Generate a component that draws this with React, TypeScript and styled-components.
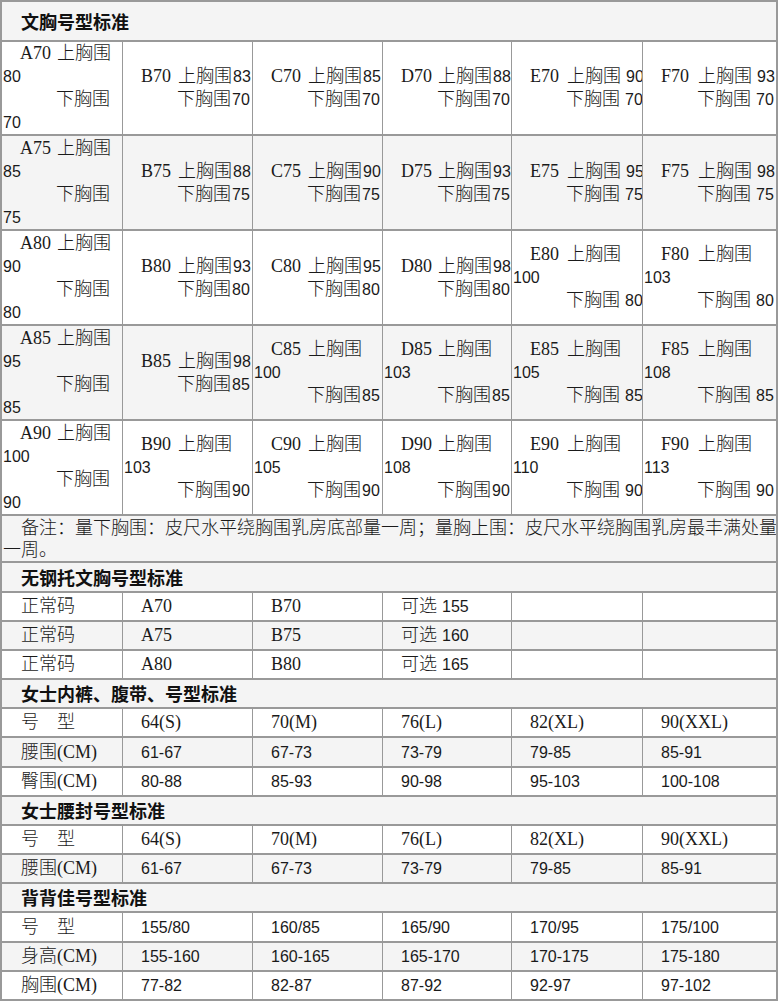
import React from 'react';
import styled, { createGlobalStyle } from 'styled-components';

const GlobalStyle = createGlobalStyle`
  body {
    margin: 0;
    background: #fff;
  }
`;

const Sheet = styled.table`
  width: 778px;
  table-layout: fixed;
  border-collapse: separate;
  border-spacing: 0;
  border-top: 2px solid #999;
  border-left: 2px solid #999;
  font-family: 'Liberation Serif', 'Noto Sans CJK SC', serif;
  font-size: 18px;
  font-weight: 300;
  line-height: 23px;
  color: #1a1a1a;
`;

const Row = styled.tr<{ $h: number; $shade?: boolean }>`
  height: ${(p) => p.$h}px;
  background: ${(p) => (p.$shade ? '#f4f4f4' : '#fff')};
`;

const Cell = styled.td`
  box-sizing: border-box;
  padding: 0 0 0 18px;
  border-right: 1px solid #999;
  border-bottom: 2px solid #999;
  vertical-align: middle;
  white-space: nowrap;
  overflow: hidden;

  &:first-child {
    padding-left: 19px;
  }

  &:last-child {
    border-right-width: 2px;
  }
`;

const TitleCell = styled(Cell)`
  font-family: 'Noto Sans CJK SC', sans-serif;
  font-weight: 700;
  color: #111;
`;

const NoteCell = styled(Cell)`
  &:first-child {
    padding-left: 1px;
  }
  line-height: 22px;
  text-indent: 18px;
`;

const BraCell = styled(Cell)`
  &:first-child {
    padding-left: 1px;
  }
  padding-left: 1px;
`;

const Line = styled.div<{ $indent: number }>`
  padding-left: ${(p) => p.$indent}px;
  white-space: nowrap;
`;

const Size = styled.span`
  display: inline-block;
  width: 37px;
`;

const Num = styled.span<{ $gap?: boolean }>`
  font-family: 'Liberation Sans', sans-serif;
  font-size: 16px;
  font-weight: 400;
  margin-left: ${(p) => (p.$gap ? 5 : 1)}px;
`;

const cups = ['A', 'B', 'C', 'D', 'E', 'F'];

const braRows = [
  { band: '70', shade: false, bust: ['80', '83', '85', '88', '90', '93'] },
  { band: '75', shade: true, bust: ['85', '88', '90', '93', '95', '98'] },
  { band: '80', shade: false, bust: ['90', '93', '95', '98', '100', '103'] },
  { band: '85', shade: true, bust: ['95', '98', '100', '103', '105', '108'] },
  { band: '90', shade: false, bust: ['100', '103', '105', '108', '110', '113'] },
];

type Section = {
  title: string;
  rows: { h: number; cells: string[] }[];
};

const sections: Section[] = [
  {
    title: '无钢托文胸号型标准',
    rows: [
      { h: 29, cells: ['正常码', 'A70', 'B70', '可选 155', '', ''] },
      { h: 29, cells: ['正常码', 'A75', 'B75', '可选 160', '', ''] },
      { h: 29, cells: ['正常码', 'A80', 'B80', '可选 165', '', ''] },
    ],
  },
  {
    title: '女士内裤、腹带、号型标准',
    rows: [
      { h: 29, cells: ['号\u3000型', '64(S)', '70(M)', '76(L)', '82(XL)', '90(XXL)'] },
      { h: 30, cells: ['腰围(CM)', '61-67', '67-73', '73-79', '79-85', '85-91'] },
      { h: 29, cells: ['臀围(CM)', '80-88', '85-93', '90-98', '95-103', '100-108'] },
    ],
  },
  {
    title: '女士腰封号型标准',
    rows: [
      { h: 29, cells: ['号\u3000型', '64(S)', '70(M)', '76(L)', '82(XL)', '90(XXL)'] },
      { h: 29, cells: ['腰围(CM)', '61-67', '67-73', '73-79', '79-85', '85-91'] },
    ],
  },
  {
    title: '背背佳号型标准',
    rows: [
      { h: 30, cells: ['号\u3000型', '155/80', '160/85', '165/90', '170/95', '175/100'] },
      { h: 29, cells: ['身高(CM)', '155-160', '160-165', '165-170', '170-175', '175-180'] },
      { h: 29, cells: ['胸围(CM)', '77-82', '82-87', '87-92', '92-97', '97-102'] },
    ],
  },
];

const titleHeights = [30, 29, 29, 29];

function Value({ text }: { text: string }) {
  if (/^[\d\-/]+$/.test(text)) return <Num style={{ marginLeft: 0 }}>{text}</Num>;
  const m = text.match(/^(可选) (\d+)$/);
  if (m) {
    return (
      <>
        {m[1]}
        <Num $gap>{m[2]}</Num>
      </>
    );
  }
  return <>{text}</>;
}

function BraSize({ cup, band, bust }: { cup: string; band: string; bust: string }) {
  const first = cup === 'A';
  const spaced = cup === 'E' || cup === 'F';
  const wraps = first || bust.length > 2;
  return (
    <BraCell>
      <Line $indent={17}>
        <Size>
          {cup}
          {band}
        </Size>
        上胸围
        {!wraps && <Num $gap={spaced}>{bust}</Num>}
      </Line>
      {wraps && (
        <Line $indent={0}>
          <Num style={{ marginLeft: 0 }}>{bust}</Num>
        </Line>
      )}
      <Line $indent={53}>
        下胸围
        {!first && <Num $gap={spaced}>{band}</Num>}
      </Line>
      {first && (
        <Line $indent={0}>
          <Num style={{ marginLeft: 0 }}>{band}</Num>
        </Line>
      )}
    </BraCell>
  );
}

export default function App() {
  return (
    <>
      <GlobalStyle />
      <Sheet>
        <colgroup>
          <col style={{ width: 121 }} />
          <col style={{ width: 130 }} />
          <col style={{ width: 130 }} />
          <col style={{ width: 129 }} />
          <col style={{ width: 131 }} />
          <col style={{ width: 135 }} />
        </colgroup>
        <tbody>
          <Row $h={40} $shade>
            <TitleCell colSpan={6}>文胸号型标准</TitleCell>
          </Row>
          {braRows.map((r, i) => (
            <Row key={r.band} $h={i === 0 ? 94 : 95} $shade={r.shade}>
              {cups.map((c, j) => (
                <BraSize key={c} cup={c} band={r.band} bust={r.bust[j]} />
              ))}
            </Row>
          ))}
          <Row $h={47} $shade>
            <NoteCell colSpan={6}>
              备注：量下胸围：皮尺水平绕胸围乳房底部量一周；量胸上围：皮尺水平绕胸围乳房最丰满处量
              <br />
              一周。
            </NoteCell>
          </Row>
          {sections.map((s, si) => (
            <React.Fragment key={s.title}>
              <Row $h={titleHeights[si]} $shade>
                <TitleCell colSpan={6}>{s.title}</TitleCell>
              </Row>
              {s.rows.map((r, ri) => (
                <Row key={ri} $h={r.h} $shade={ri % 2 === 1}>
                  {r.cells.map((c, ci) => (
                    <Cell key={ci}>
                      <Value text={c} />
                    </Cell>
                  ))}
                </Row>
              ))}
            </React.Fragment>
          ))}
        </tbody>
      </Sheet>
    </>
  );
}
